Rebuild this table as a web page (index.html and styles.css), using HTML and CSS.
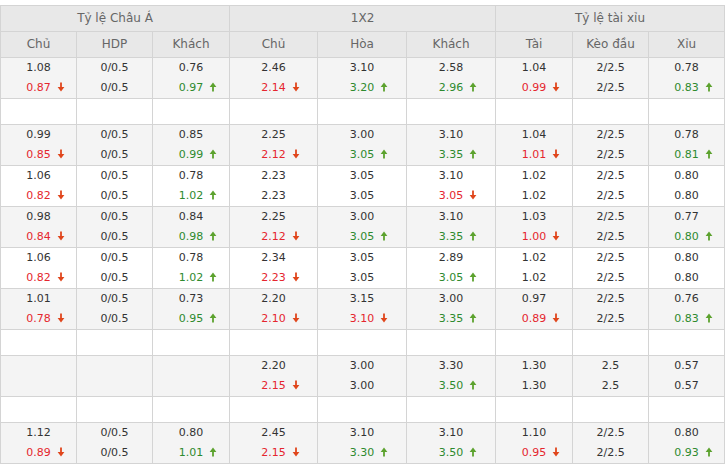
FILE: index.html
```html
<!DOCTYPE html>
<html lang="vi">
<head>
<meta charset="utf-8">
<title>Odds</title>
<link rel="stylesheet" href="styles.css">
</head>
<body>
<svg width="0" height="0" class="defs">
  <defs>
    <symbol id="dn" viewBox="0 0 8 10"><path d="M4 0.5V6" stroke="#e0461c" stroke-width="1.8"/><path d="M0.6 5H7.4L4 9.6Z" fill="#e0461c"/></symbol>
    <symbol id="up" viewBox="0 0 8 10"><path d="M4 4V9.5" stroke="#5ca22e" stroke-width="1.8"/><path d="M0.6 5H7.4L4 0.4Z" fill="#5ca22e"/></symbol>
  </defs>
</svg>
<div class="wrap">
<table class="odds">
  <colgroup>
    <col class="w76"><col class="w76"><col class="w77"><col class="w88"><col class="w89"><col class="w89"><col class="w77"><col class="w76"><col class="w76">
  </colgroup>
  <thead>
    <tr class="grp"><th colspan="3">Tỷ lệ Châu Á</th><th colspan="3">1X2</th><th colspan="3">Tỷ lệ tài xỉu</th></tr>
    <tr class="sub"><th>Chủ</th><th>HDP</th><th>Khách</th><th>Chủ</th><th>Hòa</th><th>Khách</th><th>Tài</th><th>Kèo đầu</th><th>Xỉu</th></tr>
  </thead>
  <tbody>
    <tr class="alt">
      <td><div>1.08</div><div class="dn">0.87<span class="ar"><svg><use href="#dn"/></svg></span></div></td>
      <td><div>0/0.5</div><div>0/0.5</div></td>
      <td><div>0.76</div><div class="up">0.97<span class="ar"><svg><use href="#up"/></svg></span></div></td>
      <td><div>2.46</div><div class="dn">2.14<span class="ar"><svg><use href="#dn"/></svg></span></div></td>
      <td><div>3.10</div><div class="up">3.20<span class="ar"><svg><use href="#up"/></svg></span></div></td>
      <td><div>2.58</div><div class="up">2.96<span class="ar"><svg><use href="#up"/></svg></span></div></td>
      <td><div>1.04</div><div class="dn">0.99<span class="ar"><svg><use href="#dn"/></svg></span></div></td>
      <td><div>2/2.5</div><div>2/2.5</div></td>
      <td><div>0.78</div><div class="up">0.83<span class="ar"><svg><use href="#up"/></svg></span></div></td>
    </tr>
    <tr class="empty"><td></td><td></td><td></td><td></td><td></td><td></td><td></td><td></td><td></td></tr>
    <tr class="alt">
      <td><div>0.99</div><div class="dn">0.85<span class="ar"><svg><use href="#dn"/></svg></span></div></td>
      <td><div>0/0.5</div><div>0/0.5</div></td>
      <td><div>0.85</div><div class="up">0.99<span class="ar"><svg><use href="#up"/></svg></span></div></td>
      <td><div>2.25</div><div class="dn">2.12<span class="ar"><svg><use href="#dn"/></svg></span></div></td>
      <td><div>3.00</div><div class="up">3.05<span class="ar"><svg><use href="#up"/></svg></span></div></td>
      <td><div>3.10</div><div class="up">3.35<span class="ar"><svg><use href="#up"/></svg></span></div></td>
      <td><div>1.04</div><div class="dn">1.01<span class="ar"><svg><use href="#dn"/></svg></span></div></td>
      <td><div>2/2.5</div><div>2/2.5</div></td>
      <td><div>0.78</div><div class="up">0.81<span class="ar"><svg><use href="#up"/></svg></span></div></td>
    </tr>
    <tr>
      <td><div>1.06</div><div class="dn">0.82<span class="ar"><svg><use href="#dn"/></svg></span></div></td>
      <td><div>0/0.5</div><div>0/0.5</div></td>
      <td><div>0.78</div><div class="up">1.02<span class="ar"><svg><use href="#up"/></svg></span></div></td>
      <td><div>2.23</div><div>2.23</div></td>
      <td><div>3.05</div><div>3.05</div></td>
      <td><div>3.10</div><div class="dn">3.05<span class="ar"><svg><use href="#dn"/></svg></span></div></td>
      <td><div>1.02</div><div>1.02</div></td>
      <td><div>2/2.5</div><div>2/2.5</div></td>
      <td><div>0.80</div><div>0.80</div></td>
    </tr>
    <tr class="alt">
      <td><div>0.98</div><div class="dn">0.84<span class="ar"><svg><use href="#dn"/></svg></span></div></td>
      <td><div>0/0.5</div><div>0/0.5</div></td>
      <td><div>0.84</div><div class="up">0.98<span class="ar"><svg><use href="#up"/></svg></span></div></td>
      <td><div>2.25</div><div class="dn">2.12<span class="ar"><svg><use href="#dn"/></svg></span></div></td>
      <td><div>3.00</div><div class="up">3.05<span class="ar"><svg><use href="#up"/></svg></span></div></td>
      <td><div>3.10</div><div class="up">3.35<span class="ar"><svg><use href="#up"/></svg></span></div></td>
      <td><div>1.03</div><div class="dn">1.00<span class="ar"><svg><use href="#dn"/></svg></span></div></td>
      <td><div>2/2.5</div><div>2/2.5</div></td>
      <td><div>0.77</div><div class="up">0.80<span class="ar"><svg><use href="#up"/></svg></span></div></td>
    </tr>
    <tr>
      <td><div>1.06</div><div class="dn">0.82<span class="ar"><svg><use href="#dn"/></svg></span></div></td>
      <td><div>0/0.5</div><div>0/0.5</div></td>
      <td><div>0.78</div><div class="up">1.02<span class="ar"><svg><use href="#up"/></svg></span></div></td>
      <td><div>2.34</div><div class="dn">2.23<span class="ar"><svg><use href="#dn"/></svg></span></div></td>
      <td><div>3.05</div><div>3.05</div></td>
      <td><div>2.89</div><div class="up">3.05<span class="ar"><svg><use href="#up"/></svg></span></div></td>
      <td><div>1.02</div><div>1.02</div></td>
      <td><div>2/2.5</div><div>2/2.5</div></td>
      <td><div>0.80</div><div>0.80</div></td>
    </tr>
    <tr class="alt">
      <td><div>1.01</div><div class="dn">0.78<span class="ar"><svg><use href="#dn"/></svg></span></div></td>
      <td><div>0/0.5</div><div>0/0.5</div></td>
      <td><div>0.73</div><div class="up">0.95<span class="ar"><svg><use href="#up"/></svg></span></div></td>
      <td><div>2.20</div><div class="dn">2.10<span class="ar"><svg><use href="#dn"/></svg></span></div></td>
      <td><div>3.15</div><div class="dn">3.10<span class="ar"><svg><use href="#dn"/></svg></span></div></td>
      <td><div>3.00</div><div class="up">3.35<span class="ar"><svg><use href="#up"/></svg></span></div></td>
      <td><div>0.97</div><div class="dn">0.89<span class="ar"><svg><use href="#dn"/></svg></span></div></td>
      <td><div>2/2.5</div><div>2/2.5</div></td>
      <td><div>0.76</div><div class="up">0.83<span class="ar"><svg><use href="#up"/></svg></span></div></td>
    </tr>
    <tr class="empty"><td></td><td></td><td></td><td></td><td></td><td></td><td></td><td></td><td></td></tr>
    <tr class="alt">
      <td></td>
      <td></td>
      <td></td>
      <td><div>2.20</div><div class="dn">2.15<span class="ar"><svg><use href="#dn"/></svg></span></div></td>
      <td><div>3.00</div><div>3.00</div></td>
      <td><div>3.30</div><div class="up">3.50<span class="ar"><svg><use href="#up"/></svg></span></div></td>
      <td><div>1.30</div><div>1.30</div></td>
      <td><div>2.5</div><div>2.5</div></td>
      <td><div>0.57</div><div>0.57</div></td>
    </tr>
    <tr class="empty"><td></td><td></td><td></td><td></td><td></td><td></td><td></td><td></td><td></td></tr>
    <tr class="alt">
      <td><div>1.12</div><div class="dn">0.89<span class="ar"><svg><use href="#dn"/></svg></span></div></td>
      <td><div>0/0.5</div><div>0/0.5</div></td>
      <td><div>0.80</div><div class="up">1.01<span class="ar"><svg><use href="#up"/></svg></span></div></td>
      <td><div>2.45</div><div class="dn">2.15<span class="ar"><svg><use href="#dn"/></svg></span></div></td>
      <td><div>3.10</div><div class="up">3.30<span class="ar"><svg><use href="#up"/></svg></span></div></td>
      <td><div>3.10</div><div class="up">3.50<span class="ar"><svg><use href="#up"/></svg></span></div></td>
      <td><div>1.10</div><div class="dn">0.95<span class="ar"><svg><use href="#dn"/></svg></span></div></td>
      <td><div>2/2.5</div><div>2/2.5</div></td>
      <td><div>0.80</div><div class="up">0.93<span class="ar"><svg><use href="#up"/></svg></span></div></td>
    </tr>
  </tbody>
</table>
</div>
</body>
</html>
```

FILE: styles.css
```css
html, body {
  margin: 0;
  padding: 0;
  background: #fff;
}
.defs {
  position: absolute;
  width: 0;
  height: 0;
}
.wrap {
  padding-top: 5px;
}
.odds {
  border-collapse: collapse;
  table-layout: fixed;
  width: 725px;
  font-family: "DejaVu Sans", Tahoma, sans-serif;
  font-size: 11px;
  color: #333;
}
.w76 { width: 76px; }
.w77 { width: 77px; }
.w88 { width: 88px; }
.w89 { width: 89px; }
.odds th,
.odds td {
  border: 1px solid #d4d4d4;
  padding: 0;
  text-align: center;
  vertical-align: middle;
}
.odds th {
  background: #e8e8e8;
  color: #666;
  font-weight: normal;
  font-size: 12px;
  height: 25px;
  line-height: 25px;
}
.odds td {
  height: 40px;
  background: #fff;
}
.odds td div {
  line-height: 20px;
  height: 20px;
  white-space: nowrap;
}
.odds tr.alt td {
  background: #f4f4f4;
}
.odds tr.empty td {
  height: 25px;
}
.dn { color: #e5262e; }
.up { color: #2e8a2e; }
.ar {
  display: inline-block;
  width: 0;
  overflow: visible;
  vertical-align: top;
}
.ar svg {
  display: block;
  width: 8px;
  height: 10px;
  margin: 4px 0 0 6px;
}
```
